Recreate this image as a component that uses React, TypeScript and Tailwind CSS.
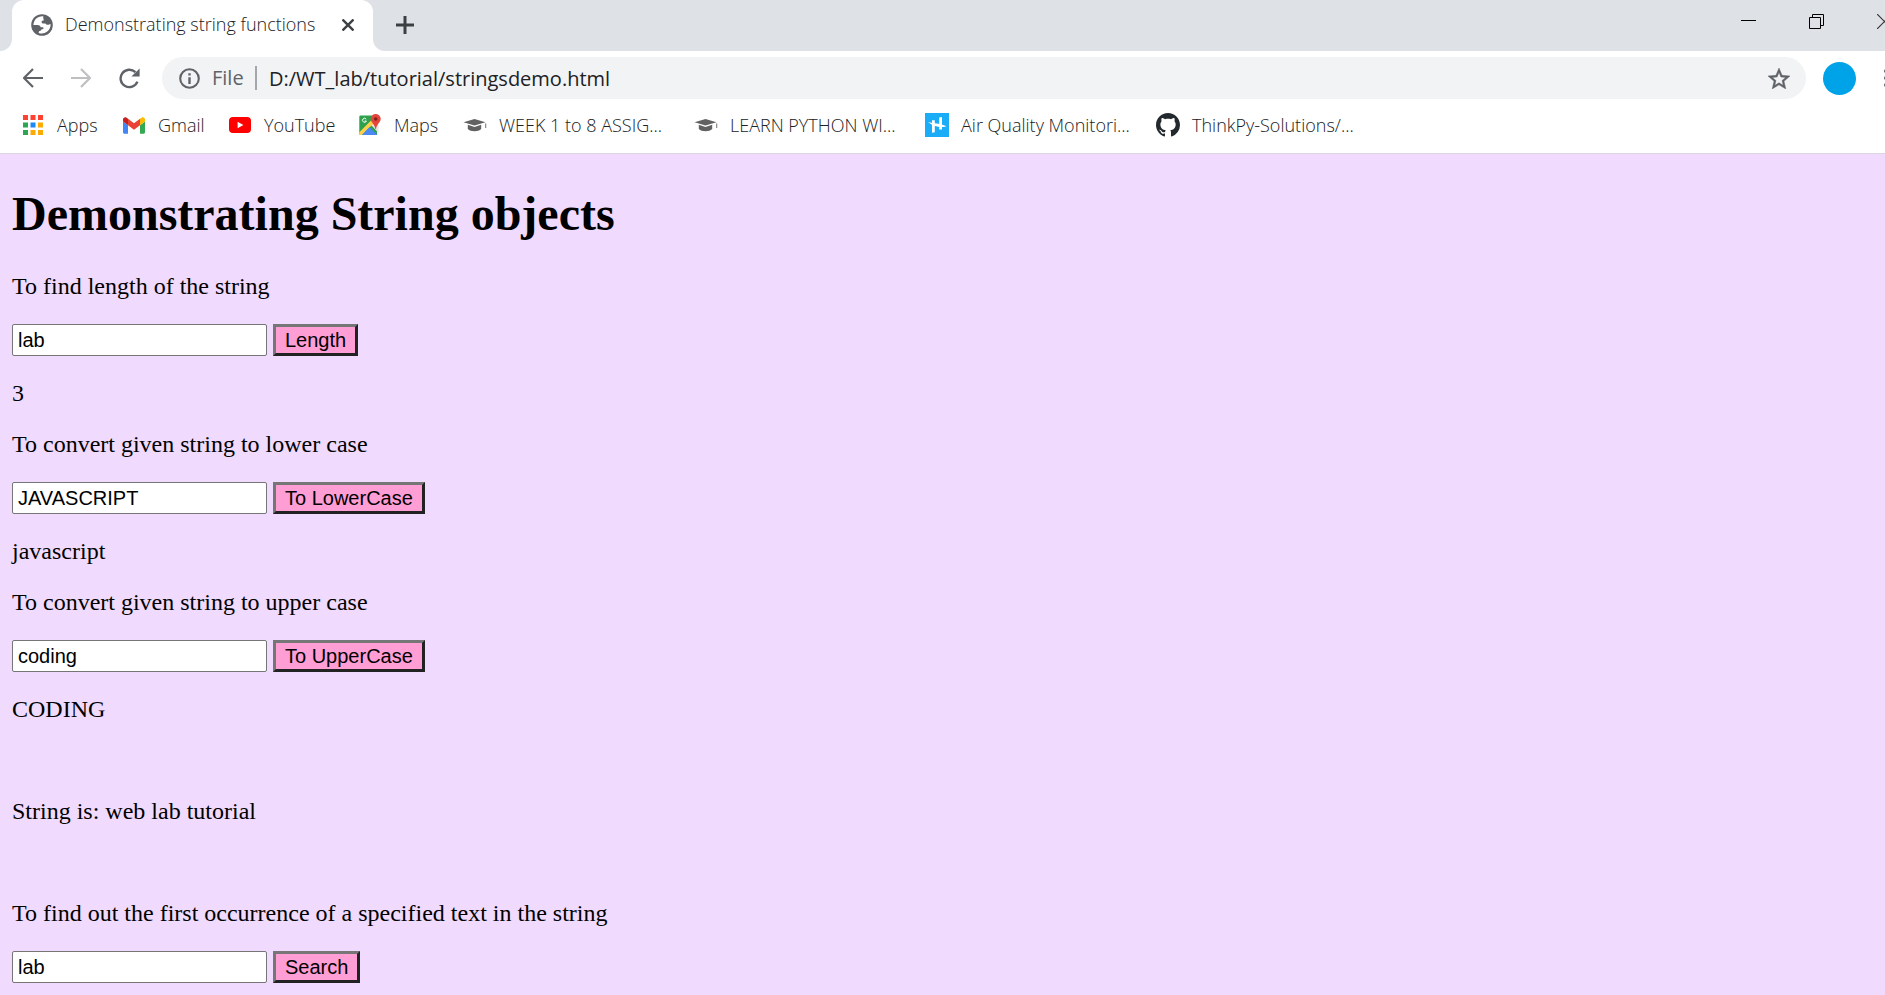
import { useId, useState } from "react";
import type { ReactNode } from "react";

function GlobeIcon() {
  return (
    <svg viewBox="0 0 22 22" className="size-[22px] shrink-0" aria-hidden="true">
      <circle cx="11" cy="11" r="10.8" fill="#5f6368" />
      <path
        fill="#fff"
        d="M12.4 2.4 C8 1.9 4.6 4.2 3.2 7.4 C2.7 8.6 2.4 9.8 2.4 11 L6.5 11 C8.2 11 9.4 11.8 9.6 13.2 L12 13.2 C12.6 13.4 12.7 14.4 12.2 14.9 L10.4 15.4 C10 16.4 9.2 17.1 8 17.2 L7.6 18.9 C12.4 21 18.3 17.9 19.4 12.6 C19.6 11.4 19.6 10.8 19.5 10 L17.4 10.7 C16 11 15 10.6 14.4 9.6 L11.6 9.4 C10.4 8.8 10.3 7.4 11.2 6.8 L13 6.2 C12.4 5 12 3.6 12.4 2.4 Z"
      />
    </svg>
  );
}

function ArrowIcon({ forward = false }: { forward?: boolean }) {
  return (
    <svg viewBox="0 0 20 20" className="size-5" fill="none" stroke="currentColor" strokeWidth="2.2" aria-hidden="true">
      {forward ? <path d="M0 10H19M10 1l9 9-9 9" /> : <path d="M20 10H1M10 1l-9 9 9 9" />}
    </svg>
  );
}

function ReloadIcon() {
  return (
    <svg viewBox="0 0 21 21" className="size-[21px]" aria-hidden="true">
      <path d="M18.4 13.6A8.7 8.7 0 1 1 16.4 4.2" fill="none" stroke="#5f6368" strokeWidth="2.4" />
      <path d="M20.6 0.4V8.6H12.4Z" fill="#5f6368" />
    </svg>
  );
}

function InfoIcon() {
  return (
    <svg viewBox="0 0 21 21" className="size-[21px] shrink-0" aria-hidden="true">
      <circle cx="10.5" cy="10.5" r="9.3" fill="none" stroke="#5f6368" strokeWidth="2.1" />
      <path d="M9.3 9.3h2.4V16H9.3zM9.3 5.3h2.4v2.3H9.3z" fill="#5f6368" />
    </svg>
  );
}

function StarIcon() {
  return (
    <svg viewBox="2 2 20 19" className="h-[21px] w-[22px]" aria-hidden="true">
      <path
        fill="#5f6368"
        stroke="#5f6368"
        strokeWidth=".4"
        d="M22 9.24l-7.19-.62L12 2 9.19 8.63 2 9.24l5.46 4.73L5.82 21 12 17.27 18.18 21l-1.63-7.03L22 9.24zM12 15.4l-3.76 2.27 1-4.28-3.32-2.88 4.38-.38L12 6.1l1.71 4.04 4.38.38-3.32 2.88 1 4.28L12 15.4z"
      />
    </svg>
  );
}

function AppsIcon() {
  const colors = ["#ff4131", "#ff4131", "#ff4131", "#2da653", "#1e88f5", "#fbab04", "#2da653", "#fbab04", "#fbab04"];
  return (
    <svg viewBox="0 0 20 20" className="size-5" aria-hidden="true">
      {colors.map((c, i) => (
        <rect key={i} x={(i % 3) * 7.5} y={Math.floor(i / 3) * 7.5} width="5" height="5" fill={c} />
      ))}
    </svg>
  );
}

function GmailIcon() {
  return (
    <svg viewBox="52 42 88 66" className="h-[17px] w-[22px]" aria-hidden="true">
      <path fill="#4285f4" d="M58 108h14V74L52 59v43c0 3.32 2.69 6 6 6" />
      <path fill="#34a853" d="M120 108h14c3.32 0 6-2.69 6-6V59l-20 15" />
      <path fill="#fbbc04" d="M120 48v26l20-15v-8c0-7.42-8.47-11.65-14.4-7.2" />
      <path fill="#ea4335" d="M72 74V48l24 18 24-18v26L96 92" />
      <path fill="#c5221f" d="M52 51v8l20 15V48l-5.6-4.2c-5.94-4.45-14.4-.22-14.4 7.2" />
    </svg>
  );
}

function YouTubeIcon() {
  return (
    <svg viewBox="0 0 22 16" className="h-4 w-[22px]" aria-hidden="true">
      <rect width="22" height="16" rx="4" fill="#f00" />
      <path d="M8.6 4.8v6.4L14.4 8z" fill="#fff" />
    </svg>
  );
}

function MapsIcon() {
  return (
    <svg viewBox="0 0 22 22" className="size-[22px]" aria-hidden="true">
      <path d="M1.5 1.5h12L18 11v10H1.5A1.3 1.3 0 0 1 .3 19.7V2.8a1.3 1.3 0 0 1 1.2-1.3z" fill="#2da14c" />
      <path d="M11.5 10.5 19.5 19V8L14 7z" fill="#e4e4e4" />
      <path d="M.3 18.2 13.5 5l2.8 2.8L3 21H1.5A1.3 1.3 0 0 1 .3 19.7z" fill="#fcd04b" />
      <path d="M10.5 13 18.5 21H3z" fill="#4a89f3" />
      <path d="M7.2 5.2A2 2 0 1 0 7.4 7H5.6" fill="none" stroke="#fff" strokeWidth="1" />
      <path d="M16.7 0A5 5 0 0 0 11.7 5c0 3.6 4 4.7 4.7 10h.6c.7-5.3 4.7-6.4 4.7-10a5 5 0 0 0-5-5z" fill="#e5453a" />
      <circle cx="16.7" cy="5" r="1.8" fill="#7c241c" />
    </svg>
  );
}

function CapIcon() {
  return (
    <svg viewBox="0 0 24 14" className="h-3.5 w-6" fill="#616161" aria-hidden="true">
      <path d="M.5 4.200 11.500 1 22.500 4.200 11.500 7.600z" />
      <path d="M4.800 6.800 11.500 8.900 18.200 6.800V11C16.500 12.700 14.500 13.200 11.500 13.200S6.500 12.700 4.800 11z" />
      <path d="M22.300 5.500h.9v4.500h-.9z" />
    </svg>
  );
}

function HacksterIcon() {
  return (
    <svg viewBox="0 0 24 24" className="size-6" aria-hidden="true">
      <rect width="24" height="24" fill="#1bacf7" />
      <path d="M7 7.200h2.800v12l-2.800.5zM14.200 4.500l2.800-.4v12.300h-2.800z" fill="#fff" />
      <path d="M3 9c4 1.300 9 .9 14.500 2.700L21.500 13.200c-5 1.800-9 .6-13.500-.6z" fill="#fff" />
    </svg>
  );
}

function GitHubIcon() {
  return (
    <svg viewBox="0 0 16 16" className="size-6" aria-hidden="true">
      <path
        fill="#24292e"
        fillRule="evenodd"
        d="M8 0C3.58 0 0 3.58 0 8c0 3.54 2.29 6.53 5.47 7.59.4.07.55-.17.55-.38 0-.19-.01-.82-.01-1.49-2.01.37-2.53-.49-2.69-.94-.09-.23-.48-.94-.82-1.13-.28-.15-.68-.52-.01-.53.63-.01 1.08.58 1.23.82.72 1.21 1.87.87 2.33.66.07-.52.28-.87.51-1.07-1.78-.2-3.64-.89-3.64-3.95 0-.87.31-1.59.82-2.15-.08-.2-.36-1.02.08-2.12 0 0 .67-.21 2.2.82.64-.18 1.32-.27 2-.27s1.36.09 2 .27c1.53-1.04 2.2-.82 2.2-.82.44 1.1.16 1.92.08 2.12.51.56.82 1.27.82 2.15 0 3.07-1.87 3.75-3.65 3.95.29.25.54.73.54 1.48 0 1.07-.01 1.93-.01 2.2 0 .21.15.46.55.38A8.01 8.01 0 0 0 16 8c0-4.42-3.58-8-8-8z"
      />
    </svg>
  );
}

const bookmarks: { label: string; icon: ReactNode; width: string }[] = [
  { label: "Apps", icon: <AppsIcon />, width: "w-[101px]" },
  { label: "Gmail", icon: <GmailIcon />, width: "w-[106px]" },
  { label: "YouTube", icon: <YouTubeIcon />, width: "w-[130px]" },
  { label: "Maps", icon: <MapsIcon />, width: "w-[105px]" },
  { label: "WEEK 1 to 8 ASSIG...", icon: <CapIcon />, width: "w-[231px]" },
  { label: "LEARN PYTHON WI...", icon: <CapIcon />, width: "w-[231px]" },
  { label: "Air Quality Monitori...", icon: <HacksterIcon />, width: "w-[231px]" },
  { label: "ThinkPy-Solutions/...", icon: <GitHubIcon />, width: "w-[231px]" },
];

function TabStrip() {
  return (
    <div className="flex h-[51px] bg-[#dee1e6]">
      <div className="w-3 bg-white">
        <div className="h-full rounded-br-xl bg-[#dee1e6]" />
      </div>
      <div className="w-[361px] bg-[#dee1e6]">
        <div className="flex h-full items-center rounded-t-xl bg-white pr-[13px] pb-0.5 pl-[19px]">
          <GlobeIcon />
          <span className="ml-3 flex-1 whitespace-nowrap text-[18px] font-light text-[#202124]">
            Demonstrating string functions
          </span>
          <button type="button" aria-label="Close tab" className="flex size-6 items-center justify-center">
            <svg viewBox="0 0 12 12" className="size-3" stroke="#3c4043" strokeWidth="2.4" aria-hidden="true">
              <path d="M.5.5l11 11M11.5.5l-11 11" />
            </svg>
          </button>
        </div>
      </div>
      <div className="w-3 bg-white">
        <div className="h-full rounded-bl-xl bg-[#dee1e6]" />
      </div>
      <button type="button" aria-label="New tab" className="ml-2 flex w-6 items-center justify-center pb-0.5">
        <svg viewBox="0 0 18 18" className="size-[18px]" stroke="#3c4043" strokeWidth="3" aria-hidden="true">
          <path d="M9 0v18M0 9h18" />
        </svg>
      </button>
      <div className="-mr-[33px] ml-auto flex h-[42px]">
        <button type="button" aria-label="Minimize" className="flex w-[68px] items-center justify-center">
          <svg viewBox="0 0 15 15" className="size-[15px]" fill="none" stroke="#000" aria-hidden="true">
            <path d="M0 6.5h15" />
          </svg>
        </button>
        <button type="button" aria-label="Restore" className="flex w-[68px] items-center justify-center">
          <svg viewBox="0 0 15 15" className="size-[15px]" fill="none" stroke="#000" aria-hidden="true">
            <path d="M.5 3.5h11v11h-11zM3.5 3.5v-3h11v11h-3" />
          </svg>
        </button>
        <button type="button" aria-label="Close" className="flex w-[68px] items-center justify-center">
          <svg viewBox="0 0 15 15" className="size-[15px]" fill="none" stroke="#333" strokeWidth="1.2" aria-hidden="true">
            <path d="M0 0l15 15M15 0L0 15" />
          </svg>
        </button>
      </div>
    </div>
  );
}

function Toolbar() {
  return (
    <div className="flex h-12 items-end bg-white pl-[23px]">
      <div className="flex h-[42px] items-center gap-7 text-[#5f6368]">
        <button type="button" aria-label="Back">
          <ArrowIcon />
        </button>
        <button type="button" aria-label="Forward" className="text-[#bdbfc1]">
          <ArrowIcon forward />
        </button>
        <button type="button" aria-label="Reload">
          <ReloadIcon />
        </button>
      </div>
      <div className="ml-[22px] flex h-[42px] flex-1 items-center rounded-full bg-[#f1f3f4] pr-4 pl-[17px]">
        <InfoIcon />
        <span className="ml-3 w-[43px] text-[20px] text-[#5f6368]">File</span>
        <span className="h-6 w-0.5 bg-[#a3a7ab]" />
        <input
          type="text"
          aria-label="Address"
          defaultValue="D:/WT_lab/tutorial/stringsdemo.html"
          className="ml-3 h-8 min-w-0 flex-1 bg-transparent text-[20px] text-[#202124] outline-none"
        />
        <button type="button" aria-label="Bookmark this page">
          <StarIcon />
        </button>
      </div>
      <div className="flex h-[42px] items-center">
        <button type="button" aria-label="Profile" className="mr-7 ml-[17px] size-[33px] rounded-full bg-[#00a2e8]" />
        <button type="button" aria-label="Menu" className="-mr-[3px] w-1">
          <svg viewBox="0 0 4 18" className="h-[18px] w-1" fill="#5f6368" aria-hidden="true">
            <circle cx="2" cy="2" r="2" />
            <circle cx="2" cy="9" r="2" />
            <circle cx="2" cy="16" r="2" />
          </svg>
        </button>
      </div>
    </div>
  );
}

function BookmarksBar() {
  return (
    <nav aria-label="Bookmarks" className="border-b border-[#dcd6e3] bg-white pl-[21px]">
      <ul className="flex h-[54px] items-center pb-0.5">
        {bookmarks.map((b) => (
          <li key={b.label} className={b.width}>
            <a href="#" className="flex items-center gap-3 whitespace-nowrap text-[18px] font-light text-[#202124]">
              <span className="flex w-6 shrink-0 justify-center">{b.icon}</span>
              {b.label}
            </a>
          </li>
        ))}
      </ul>
    </nav>
  );
}

interface DemoProps {
  prompt: string;
  initial: string;
  action: string;
  initialResult?: string;
  compute: (value: string) => string;
}

function Demo({ prompt, initial, action, initialResult, compute }: DemoProps) {
  const id = useId();
  const [value, setValue] = useState(initial);
  const [result, setResult] = useState(initialResult);
  return (
    <section className="flex flex-col gap-6">
      <label htmlFor={id}>{prompt}</label>
      <div className="flex h-8 gap-1.5 font-['Liberation_Sans',Arial,sans-serif] text-[20px]">
        <input
          id={id}
          type="text"
          value={value}
          onChange={(e) => setValue(e.target.value)}
          className="w-[255px] rounded-xs border border-[#767676] bg-white px-[5px] text-black"
        />
        <button
          type="button"
          onClick={() => setResult(compute(value))}
          className="border-[3px] border-t-[#767676] border-r-[#222] border-b-[#222] border-l-[#767676] bg-[#ff9dd5] px-[9px] leading-[23px] text-black"
        >
          {action}
        </button>
      </div>
      {result !== undefined && <output htmlFor={id}>{result}</output>}
    </section>
  );
}

const subject = "web lab tutorial";

export default function App() {
  return (
    <div className="flex min-h-screen flex-col overflow-hidden">
      <header className="font-['Open_Sans','Noto_Sans',sans-serif]">
        <TabStrip />
        <Toolbar />
        <BookmarksBar />
      </header>
      <main className="flex flex-1 flex-col gap-6 bg-[#f0dafd] px-3 pt-8 pb-3 font-['Liberation_Serif','Times_New_Roman',serif] text-[24px] leading-[27px] text-black">
        <h1 className="mb-2 text-[48px] leading-[55px] font-bold">Demonstrating String objects</h1>
        <Demo
          prompt="To find length of the string"
          initial="lab"
          action="Length"
          initialResult="3"
          compute={(v) => String(v.length)}
        />
        <Demo
          prompt="To convert given string to lower case"
          initial="JAVASCRIPT"
          action="To LowerCase"
          initialResult="javascript"
          compute={(v) => v.toLowerCase()}
        />
        <Demo
          prompt="To convert given string to upper case"
          initial="coding"
          action="To UpperCase"
          initialResult="CODING"
          compute={(v) => v.toUpperCase()}
        />
        <p className="my-[51px]">String is: {subject}</p>
        <Demo
          prompt="To find out the first occurrence of a specified text in the string"
          initial="lab"
          action="Search"
          compute={(v) => String(subject.indexOf(v))}
        />
      </main>
    </div>
  );
}
